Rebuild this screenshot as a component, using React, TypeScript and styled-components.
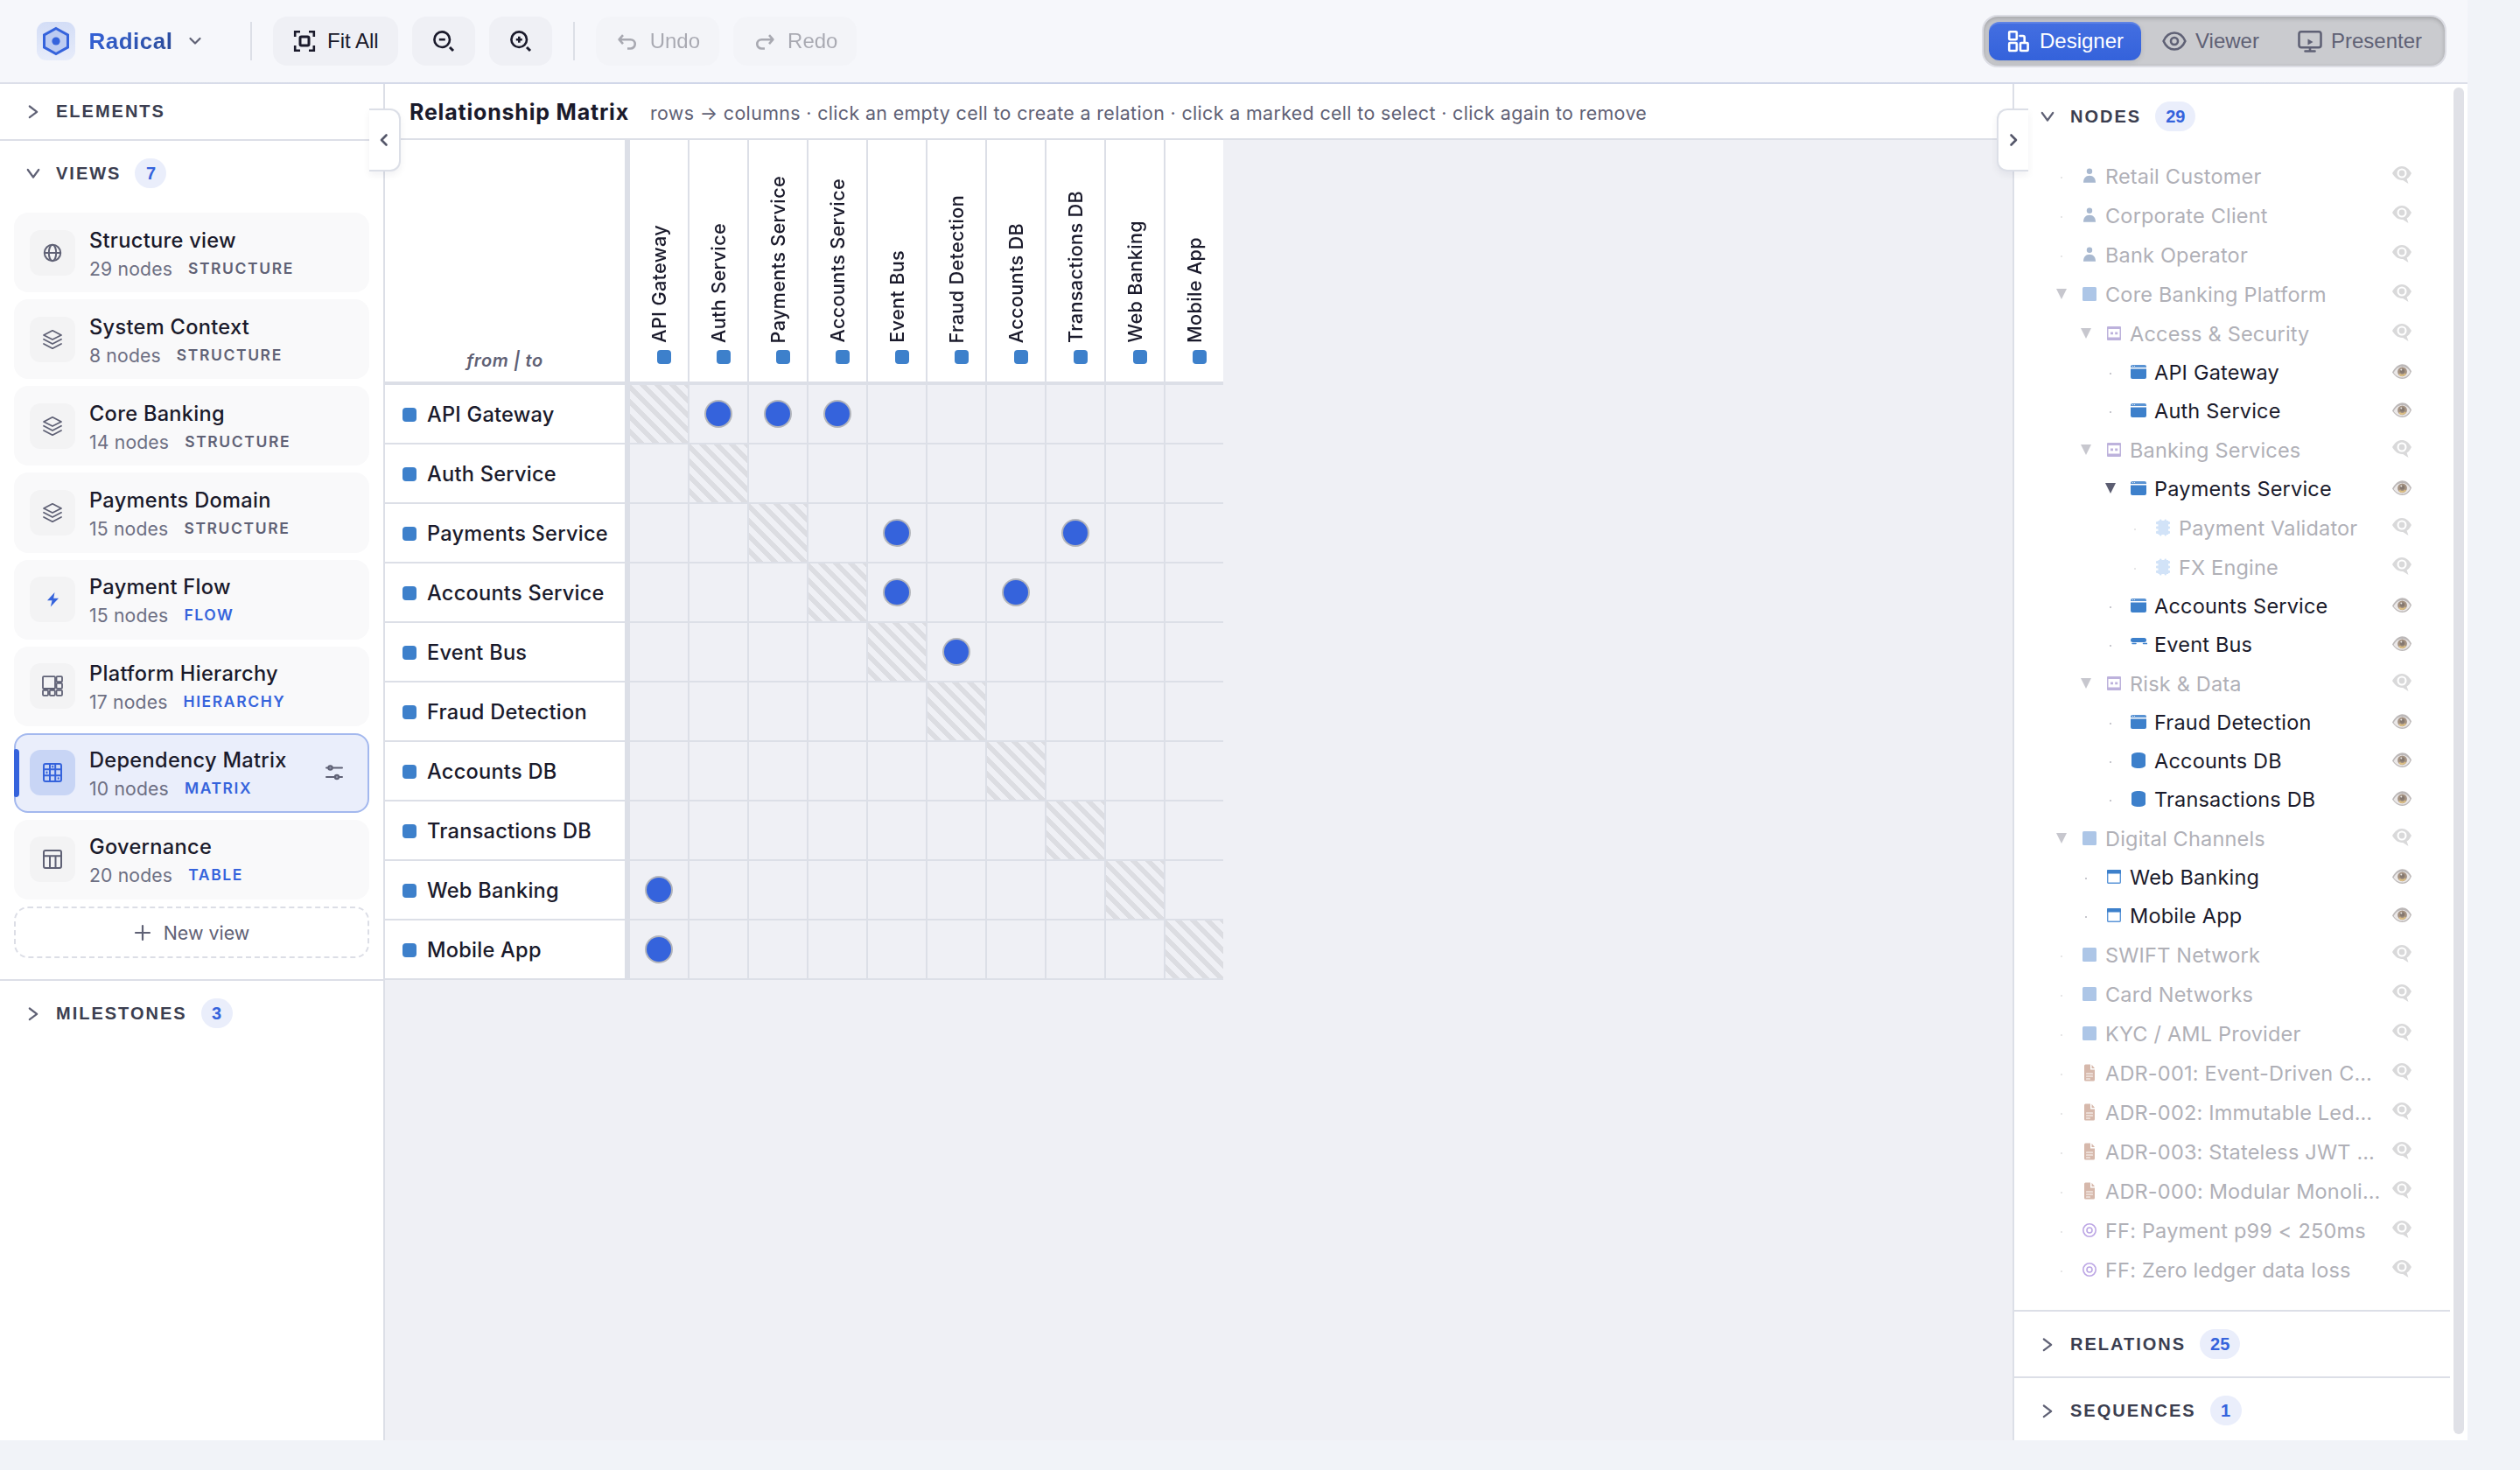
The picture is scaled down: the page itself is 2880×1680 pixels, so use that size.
import React from "react";
import styled, { createGlobalStyle, css } from "styled-components";

const ui = `Inter, "Liberation Sans", sans-serif`;
const arial = `"Liberation Sans", Arial, sans-serif`;

const c = {
  page: "#f1f3f8",
  header: "#f6f7fb",
  line: "#dcdfe7",
  canvas: "#eff0f5",
  ink: "#1a1a2b",
  muted: "#5f6175",
  heading: "#3b3e50",
  accent: "#3563dc",
  soft: "#eaeefb",
  node: "#3d80cb",
};

const GlobalStyle = createGlobalStyle`
  * { box-sizing: border-box; }
  html, body { margin: 0; padding: 0; background: ${c.page}; }
  body { font-family: ${ui}; color: ${c.ink}; }
  button { font: inherit; color: inherit; border: 0; margin: 0; padding: 0; background: none; }
`;

/* ---------- shell ---------- */

const Shell = styled.div`
  width: 2820px;
  height: 1646px;
  display: flex;
  flex-direction: column;
  overflow: hidden;
`;

const Header = styled.header`
  height: 96px;
  flex: none;
  display: flex;
  align-items: center;
  justify-content: space-between;
  padding: 0 24px 2px 42px;
  background:
    linear-gradient(90deg, #dcdfe9, #c6cfe8 50%, #dcdfe9) bottom / 100% 2px no-repeat,
    ${c.header};
`;

const HeaderGroup = styled.div`
  display: flex;
  align-items: center;
`;

const Brand = styled.div`
  width: 220px;
  display: flex;
  align-items: center;
`;

const BrandTile = styled.span`
  width: 44px;
  height: 44px;
  border-radius: 11px;
  display: grid;
  place-items: center;
  background: linear-gradient(180deg, #d3ddf6, #e7ecfa);
`;

const BrandName = styled.span`
  margin: 0 17px 0 15.5px;
  font: 700 26px/32px ${arial};
  letter-spacing: 0.5px;
  color: transparent;
  background: linear-gradient(135deg, ${c.accent}, #2a4a94);
  background-clip: text;
  -webkit-background-clip: text;
`;

const Divider = styled.i`
  width: 2px;
  height: 44px;
  margin: 0 24px;
  background: ${c.line};
`;

const Tools = styled.div`
  display: flex;
  gap: 16px;
`;

const ToolButton = styled.button<{ $disabled?: boolean }>`
  height: 56px;
  padding: 0 22px;
  display: flex;
  align-items: center;
  gap: 12px;
  border-radius: 16px;
  background: ${c.canvas};
  font: 400 24px/28px ${arial};
  opacity: ${(p) => (p.$disabled ? 0.35 : 1)};
`;

const ModeSwitch = styled.div`
  height: 60px;
  padding: 6px;
  display: flex;
  gap: 4px;
  border: 2px solid #dcdde4;
  border-radius: 18px;
  background: #cacbcf;
  box-shadow: inset 0 2px 5px rgba(0, 0, 0, 0.2);
`;

const ModeButton = styled.button<{ $active?: boolean }>`
  padding: 0 20px;
  display: flex;
  align-items: center;
  gap: 10px;
  border-radius: 12px;
  font: 400 24px/28px ${arial};
  color: ${c.muted};
  ${(p) =>
    p.$active &&
    css`
      color: #fff;
      background: linear-gradient(180deg, #446fe1, #3462db);
      box-shadow: inset 0 2px 0 rgba(255, 255, 255, 0.14), 0 2px 6px rgba(0, 0, 0, 0.1);
    `}
`;

const Body = styled.div`
  flex: 1;
  min-height: 0;
  display: flex;
`;

/* ---------- sidebars ---------- */

const LeftPanel = styled.aside`
  position: relative;
  z-index: 1;
  width: 440px;
  flex: none;
  background: #fff;
  border-right: 2px solid ${c.line};
`;

const RightPanel = styled.aside`
  position: relative;
  width: 520px;
  flex: none;
  display: flex;
  background: #fff;
  border-left: 2px solid ${c.line};
`;

const RightContent = styled.div`
  width: 498px;
  height: 1550px;
  overflow: hidden;
`;

const ScrollTrack = styled.div`
  width: 20px;
  padding: 4px 4px 7px;
  display: flex;
`;

const ScrollThumb = styled.div`
  flex: 1;
  border-radius: 6px;
  background: #e0e1e7;
`;

const CollapseTab = styled.button<{ $side: "left" | "right" }>`
  position: absolute;
  z-index: 2;
  top: 28px;
  width: 36px;
  height: 72px;
  display: grid;
  place-items: center;
  color: #55576a;
  background: #fff;
  border: 2px solid ${c.line};
  box-shadow: 0 4px 8px rgba(20, 24, 50, 0.06);
  ${(p) =>
    p.$side === "left"
      ? css`
          right: -20px;
          border-left: 0;
          border-radius: 0 12px 12px 0;
        `
      : css`
          left: -20px;
          border-right: 0;
          border-radius: 12px 0 0 12px;
        `}
`;

const Section = styled.section`
  border-bottom: 2px solid ${c.line};
  &:last-of-type {
    border-bottom: 0;
  }
`;

const SectionHead = styled.div`
  display: flex;
  align-items: center;
  padding: 20px 24px;
  color: ${c.heading};
  font: 700 20px/23px ${arial};
  letter-spacing: 2px;
  svg {
    margin-right: 12px;
    color: ${c.muted};
  }
`;

const Count = styled.span`
  min-width: 36px;
  height: 34px;
  margin-left: 16px;
  padding: 0 12px;
  border-radius: 17px;
  text-align: center;
  font: 700 20px/34px ${arial};
  letter-spacing: 0;
  color: ${c.accent};
  background: ${c.soft};
`;

const ViewList = styled.div`
  display: flex;
  flex-direction: column;
  gap: 8px;
  padding: 8px 16px 24px;
`;

const ViewCard = styled.div<{ $active?: boolean }>`
  position: relative;
  height: 91.14px;
  display: flex;
  align-items: center;
  padding: 0 26px 0 16px;
  border: 2px solid transparent;
  border-radius: 16px;
  background: #f9f9fa;
  ${(p) =>
    p.$active &&
    css`
      border-color: #a3b8ee;
      background: ${c.soft};
      &::before {
        content: "";
        position: absolute;
        left: -2px;
        top: 16px;
        width: 6px;
        height: 55px;
        border-radius: 2px 4px 4px 2px;
        background: ${c.accent};
      }
    `}
`;

const ViewTile = styled.span<{ $active?: boolean; $blue?: boolean }>`
  width: 52px;
  height: 52px;
  flex: none;
  margin-right: 16px;
  display: grid;
  place-items: center;
  border-radius: 12px;
  color: ${(p) => (p.$active || p.$blue ? c.accent : c.muted)};
  background: ${(p) => (p.$active ? "#c8d5f5" : "#f3f3f4")};
`;

const ViewText = styled.div`
  flex: 1;
  padding-top: 4px;
`;

const ViewTitle = styled.div`
  font-size: 23.6px;
  font-weight: 500;
  line-height: 32px;
  letter-spacing: 0.3px;
`;

const ViewMeta = styled.div`
  display: flex;
  align-items: center;
  gap: 18px;
  font-size: 21.2px;
  line-height: 32px;
  letter-spacing: 0.15px;
  color: #6d6f83;
`;

const ViewTag = styled.span<{ $blue?: boolean }>`
  font-size: 17.5px;
  font-weight: 600;
  letter-spacing: 1.6px;
  color: ${(p) => (p.$blue ? c.accent : c.muted)};
`;

const NewView = styled.button`
  height: 59px;
  display: flex;
  align-items: center;
  justify-content: center;
  gap: 14px;
  border: 2px dashed #dcdee6;
  border-radius: 16px;
  font-size: 21.4px;
  color: ${c.muted};
`;

/* ---------- matrix ---------- */

const Main = styled.main`
  flex: 1;
  background: ${c.canvas};
`;

const MatrixBar = styled.div`
  height: 64px;
  padding: 14px 0 0 28px;
  display: flex;
  align-items: baseline;
  gap: 24px;
  background: #fff;
  border-bottom: 2px solid ${c.line};
`;

const MatrixTitle = styled.h1`
  margin: 0;
  font-size: 25px;
  font-weight: 700;
  line-height: 36px;
  letter-spacing: 0.8px;
`;

const MatrixHint = styled.span`
  font-size: 21.4px;
  letter-spacing: 0.36px;
  color: ${c.muted};
`;

const Matrix = styled.div`
  width: 958px;
  display: grid;
  grid-template-columns: 280px repeat(9, 68px) 66px;
  grid-template-rows: 280px repeat(10, 68px);
`;

const Corner = styled.div`
  display: flex;
  align-items: flex-end;
  justify-content: center;
  padding-bottom: 11px;
  background: #fff;
  border-right: 6px solid ${c.line};
  border-bottom: 4px solid ${c.line};
  font-size: 20px;
  font-weight: 600;
  font-style: italic;
  line-height: 26px;
  letter-spacing: 0.6px;
  color: ${c.muted};
`;

const ColumnHead = styled.div<{ $last: boolean }>`
  display: flex;
  flex-direction: column;
  align-items: center;
  justify-content: flex-end;
  gap: 8px;
  padding-bottom: 20px;
  background: #fff;
  border-right: ${(p) => (p.$last ? 0 : 2)}px solid ${c.line};
  border-bottom: 4px solid ${c.line};
`;

const ColumnLabel = styled.span`
  writing-mode: vertical-rl;
  transform: rotate(180deg);
  font-size: 21.6px;
  font-weight: 500;
  line-height: 28px;
  letter-spacing: 0.35px;
  white-space: nowrap;
`;

const Swatch = styled.i<{ $shift?: boolean }>`
  width: 16px;
  height: 16px;
  flex: none;
  border-radius: 4px;
  margin-left: ${(p) => (p.$shift ? 12 : 0)}px;
  background: ${c.node};
`;

const RowHead = styled.div`
  display: flex;
  align-items: center;
  gap: 12px;
  padding: 1px 0 0 20px;
  background: #fff;
  border-right: 6px solid ${c.line};
  border-bottom: 2px solid ${c.line};
  font-size: 23.6px;
  font-weight: 500;
  letter-spacing: 0.24px;
  white-space: nowrap;
`;

const Cell = styled.div<{ $self: boolean; $last: boolean }>`
  display: grid;
  place-items: center;
  border-right: ${(p) => (p.$last ? 0 : 2)}px solid ${c.line};
  border-bottom: 2px solid ${c.line};
  ${(p) =>
    p.$self &&
    css`
      background: repeating-linear-gradient(45deg, ${c.canvas} 0 6px, #dcdde2 6px 12px) padding-box;
    `}
`;

const Dot = styled.i`
  width: 28px;
  height: 28px;
  border-radius: 50%;
  background: ${c.accent};
  box-shadow: 0 0 0 2px #b3b5bb;
`;

/* ---------- node tree ---------- */

const Tree = styled.div`
  padding: 8px 0 24px;
`;

const TreeRow = styled.div<{ $level: number; $dim: boolean }>`
  height: ${(p) => (p.$dim ? 45 : 44)}px;
  padding: ${(p) => (p.$dim ? 1 : 0)}px 43px 0 ${(p) => 42 + p.$level * 28}px;
  display: flex;
  align-items: center;
  font-size: 23.5px;
  letter-spacing: 0.19px;
`;

const Toggle = styled.span<{ $dim: boolean }>`
  width: 24px;
  height: 20px;
  margin-right: 10px;
  display: grid;
  place-items: center;
  color: ${(p) => (p.$dim ? "#c7c7ce" : "#5c5e72")};
`;

const Leaf = styled.i<{ $dim: boolean }>`
  width: 2px;
  height: 2px;
  border-radius: 1px;
  margin-top: 3px;
  background: ${(p) => (p.$dim ? "#dededf" : "#b4b5bc")};
`;

const NodeIcon = styled.span`
  width: 20px;
  height: 20px;
  margin-right: 8px;
  display: grid;
  place-items: center;
`;

const NodeName = styled.span<{ $dim: boolean }>`
  flex: 1;
  white-space: nowrap;
  color: ${(p) => (p.$dim ? "#b0b0b7" : c.ink)};
`;

const HiddenMark = styled.span`
  margin-bottom: 3px;
`;

/* ---------- icons ---------- */

const Svg = ({ s = 28, w = 2.6, box, children, ...rest }: any) => (
  <svg
    width={s}
    height={s}
    viewBox={box ?? `0 0 ${s} ${s}`}
    fill="none"
    stroke="currentColor"
    strokeWidth={w}
    strokeLinecap="round"
    strokeLinejoin="round"
    display="block"
    {...rest}
  >
    {children}
  </svg>
);

const Logo = () => (
  <Svg s={36} w={3} color={c.accent}>
    <path d="M18 3.5 31.5 11v14L18 32.5 4.5 25V11z" fill="#bccbf1" strokeLinejoin="miter" />
    <circle cx="18" cy="18" r="4.6" fill={c.accent} stroke="none" />
  </Svg>
);
const FitIcon = () => (
  <Svg strokeLinecap="butt" strokeLinejoin="miter">
    <path d="M3.2 9V3.2H9M19 3.2h5.8V9M24.8 19v5.8H19M9 24.8H3.2V19" />
    <rect x="9" y="9" width="10" height="10" rx="1.5" strokeWidth="3" />
  </Svg>
);
const ZoomIcon = ({ plus }: { plus?: boolean }) => (
  <Svg strokeLinecap="butt">
    <circle cx="12.2" cy="12.2" r="8.8" />
    <path d={plus ? "M8.8 12.2h7M12.3 8.7v7" : "M8.8 12.2h7"} />
    <path d="M21 21l4 4" strokeWidth="3" />
  </Svg>
);
const UndoIcon = ({ flip }: { flip?: boolean }) => (
  <Svg transform={flip ? "scale(-1 1)" : undefined}>
    <path d="M9 7.2L4.6 12.2l4.4 5M5 12.2h12.6a5.1 5.1 0 010 10.3H14" strokeLinecap="butt" />
  </Svg>
);
const DesignerIcon = () => (
  <Svg>
    <rect x="3.2" y="3.2" width="8.6" height="9" rx="1" />
    <rect x="3.2" y="16" width="8.6" height="9" rx="1" />
    <rect x="16" y="16" width="8.6" height="9" rx="1" />
    <path d="M15.5 8h3.4a1.8 1.8 0 011.8 1.8V15" />
  </Svg>
);
const ViewerIcon = () => (
  <Svg>
    <path d="M1.6 14C4 8.5 8.5 4.5 14 4.5S24 8.5 26.4 14C24 19.5 19.5 23.5 14 23.5S4 19.5 1.6 14z" />
    <circle cx="14" cy="14" r="4" />
  </Svg>
);
const PresenterIcon = () => (
  <Svg>
    <rect x="1.5" y="3.2" width="25" height="18" rx="2.5" />
    <path d="M8.5 25.5h11M14 22v3" />
    <path d="M11.5 11.5v7l6-3.500z" fill="currentColor" stroke="none" />
  </Svg>
);
const TabChevron = ({ right }: { right?: boolean }) => (
  <Svg s={20} w={2.6} transform={right ? "scale(-1 1)" : undefined}>
    <path d="M12.5 4.5L7 10l5.5 5.5" />
  </Svg>
);

const viewIcons: Record<string, React.ReactNode> = {
  globe: (
    <Svg s={24} w={2}>
      <circle cx="12" cy="12" r="9.2" />
      <ellipse cx="12" cy="12" rx="4.2" ry="9.2" />
      <path d="M3 12h18" />
    </Svg>
  ),
  layers: (
    <Svg s={24} w={1.8}>
      <path d="M12 1.8L22 7l-10 5L2 7z" />
      <path d="M2 11.8l10 5.2 10-5.2M2 17l10 5.2L22 17" />
    </Svg>
  ),
  bolt: (
    <Svg s={24}>
      <path d="M14.5 4L6 13.2h5.5L9.8 20.5 19 10.8h-5.8z" fill="currentColor" stroke="none" />
    </Svg>
  ),
  hierarchy: (
    <Svg s={24} w={1.8}>
      <rect x="1" y="1.2" width="14" height="13.8" rx="1" />
      <rect x="16.5" y="1.2" width="6.5" height="6" rx="1" />
      <rect x="16.5" y="8.8" width="6.5" height="6" rx="1" />
      <rect x="1" y="16.8" width="6" height="6" rx="1" />
      <rect x="8.8" y="16.8" width="6" height="6" rx="1" />
      <rect x="16.5" y="16.8" width="6.5" height="6" rx="1" />
    </Svg>
  ),
  matrix: (
    <Svg s={24} w={2}>
      <rect x="2" y="2" width="20" height="20" rx="2" />
      <path d="M9 2v20M15.2 2v20M2 8.2h20M2 15.2h20" />
      <path d="M12.2 4.8v.6M5.5 11.6v.6M18.7 18.2v.6" />
    </Svg>
  ),
  table: (
    <Svg s={24} w={2}>
      <rect x="2" y="2" width="20" height="20" rx="2" />
      <path d="M2 8.2h20M9 8.2V22M15.5 8.2V22" />
    </Svg>
  ),
};

const SettingsIcon = () => (
  <Svg s={24} w={2} color={c.muted}>
    <path d="M3 6.5h18M3 17h18" />
    <circle cx="7.5" cy="6.5" r="2.2" fill="#8f93a8" />
    <circle cx="15" cy="17" r="2.2" fill="#8f93a8" />
  </Svg>
);
const PlusIcon = () => (
  <Svg s={20} w={2.2}>
    <path d="M10 2v16M2 10h16" />
  </Svg>
);

const nodeIcons: Record<string, React.ReactNode> = {
  person: (
    <Svg s={20} stroke="none">
      <g fill="#a9b9d0">
        <circle cx="10" cy="4.8" r="3.2" />
        <path d="M3 17.8c0-5 2.5-8 7-8s7 3 7 8z" />
      </g>
    </Svg>
  ),
  system: (
    <Svg s={20} stroke="none">
      <rect x="2" y="2" width="16" height="16" rx="1.5" fill="#adc6e7" />
    </Svg>
  ),
  group: (
    <Svg s={20} stroke="none">
      <path fill="#bdb2dc" fillRule="evenodd" d="M3 2h14a1 1 0 011 1v14a1 1 0 01-1 1H3a1 1 0 01-1-1V3a1 1 0 011-1zm.5 3v9.500h13V5z" />
      <path fill="#bdb2dc" d="M6 8.5h3v2.8H6zM11.2 8.5h3v2.8h-3z" />
    </Svg>
  ),
  service: (
    <Svg s={20} stroke="none">
      <path fill={c.node} d="M1 5V4a2 2 0 012-2h14a2 2 0 012 2v1z" opacity=".85" />
      <path d="M3 3.5h1M5 3.5h1" stroke="#fff" strokeWidth="0.8" strokeLinecap="butt" />
      <path fill={c.node} d="M1 6.5h18V16a2 2 0 01-2 2H3a2 2 0 01-2-2z" />
    </Svg>
  ),
  chip: (
    <Svg s={20} stroke="none">
      <g fill="#d2e3f8">
        <rect x="4.5" y="2" width="11.5" height="16" />
        <rect x="2" y="3" width="16" height="3.2" rx="1" />
        <rect x="2" y="8.4" width="16" height="3.2" rx="1" />
        <rect x="2" y="13.8" width="16" height="3.2" rx="1" />
        <rect x="6" y="0.5" width="2.4" height="19" rx="1" />
        <rect x="11.6" y="0.5" width="2.4" height="19" rx="1" />
      </g>
    </Svg>
  ),
  bus: (
    <Svg s={20} stroke="none">
      <rect x="1" y="3" width="18" height="5" rx="2.5" fill={c.node} />
      <path d="M3 9.5h4M15.5 9.5H20" stroke={c.node} strokeWidth="1.5" />
    </Svg>
  ),
  db: (
    <Svg s={20} stroke="none">
      <path fill={c.node} d="M2 4.5C2 2.3 5.5 1 10 1s8 1.3 8 3.5v11c0 2.2-3.5 3.5-8 3.5s-8-1.300-8-3.500z" />
    </Svg>
  ),
  app: (
    <Svg s={20} w={1.4} color="#5b95d8">
      <rect x="2.7" y="2.7" width="14.6" height="14.6" rx="1" />
      <path d="M2 3a1 1 0 011-1h14a1 1 0 011 1v3.5H2z" fill={c.node} stroke="none" />
    </Svg>
  ),
  doc: (
    <Svg s={20} stroke="none">
      <path fill="#d6b8ab" d="M4 2a1.5 1.5 0 011.5-1.500H11v6h5V18a1.500 1.500 0 01-1.500 1.500h-9A1.500 1.500 0 014 18zM12.500 .8L16 5h-3.500z" />
      <path d="M6.500 11h7M6.500 14h7M6.500 17h4" stroke="#fff" strokeWidth="1.1" />
    </Svg>
  ),
  target: (
    <Svg s={20} w={1.6} color="#bca6e4">
      <circle cx="10" cy="10" r="7.2" />
      <circle cx="10" cy="10" r="3" />
    </Svg>
  ),
};

const EyeOpen = () => (
  <svg width="24" height="20" viewBox="0 0 24 20" display="block">
    <path d="M1 10.5C4 5 8 1.2 12.5 1.2S20.500 4.500 23 9.500c-2 5-6 8.500-10.500 8.500S4 15 1 10.500z" fill="#bcb8b8" />
    <path d="M2.500 11C5 6.500 8.500 4 12.500 4s7 2.500 9 6c-2 4-5 6.500-9 6.500S5 14.500 2.500 11z" fill="#ebe8e8" />
    <circle cx="12.5" cy="9.8" r="5.4" fill="#a39181" />
    <path d="M9 12.5a4.500 4.500 0 007.200-.5" stroke="#dcbf84" strokeWidth="2" fill="none" />
    <circle cx="12.5" cy="9" r="2.6" fill="#85786f" />
    <circle cx="11.3" cy="7.5" r="1" fill="#e8e4e0" />
  </svg>
);
const EyeHidden = () => (
  <svg width="24" height="24" viewBox="0 0 24 24" display="block">
    <path
      fill="#d9d9da"
      fillRule="evenodd"
      d="M1 10C4 5 7.500 2 12 2s8 3 11 8c-1.500 3-3.300 5.200-5.400 6.600L19.500 22l-6.300-4.100C8 18.500 4 15 1 10zM12 4.500a5.500 5.500 0 100 11 5.500 5.500 0 000-11z"
    />
    <circle cx="12" cy="10" r="3.4" fill="#d9d9da" />
  </svg>
);

/* ---------- data ---------- */

const views = [
  { name: "Structure view", nodes: 29, tag: "STRUCTURE", icon: "globe" },
  { name: "System Context", nodes: 8, tag: "STRUCTURE", icon: "layers" },
  { name: "Core Banking", nodes: 14, tag: "STRUCTURE", icon: "layers" },
  { name: "Payments Domain", nodes: 15, tag: "STRUCTURE", icon: "layers" },
  { name: "Payment Flow", nodes: 15, tag: "FLOW", icon: "bolt" },
  { name: "Platform Hierarchy", nodes: 17, tag: "HIERARCHY", icon: "hierarchy" },
  { name: "Dependency Matrix", nodes: 10, tag: "MATRIX", icon: "matrix", active: true },
  { name: "Governance", nodes: 20, tag: "TABLE", icon: "table" },
];

const elements = [
  "API Gateway",
  "Auth Service",
  "Payments Service",
  "Accounts Service",
  "Event Bus",
  "Fraud Detection",
  "Accounts DB",
  "Transactions DB",
  "Web Banking",
  "Mobile App",
];

const relations = new Set(["0-1", "0-2", "0-3", "2-4", "2-7", "3-4", "3-6", "4-5", "8-0", "9-0"]);

type Node = [level: number, icon: string, name: string, visible?: boolean, open?: boolean];

const nodes: Node[] = [
  [0, "person", "Retail Customer"],
  [0, "person", "Corporate Client"],
  [0, "person", "Bank Operator"],
  [0, "system", "Core Banking Platform", false, true],
  [1, "group", "Access & Security", false, true],
  [2, "service", "API Gateway", true],
  [2, "service", "Auth Service", true],
  [1, "group", "Banking Services", false, true],
  [2, "service", "Payments Service", true, true],
  [3, "chip", "Payment Validator"],
  [3, "chip", "FX Engine"],
  [2, "service", "Accounts Service", true],
  [2, "bus", "Event Bus", true],
  [1, "group", "Risk & Data", false, true],
  [2, "service", "Fraud Detection", true],
  [2, "db", "Accounts DB", true],
  [2, "db", "Transactions DB", true],
  [0, "system", "Digital Channels", false, true],
  [1, "app", "Web Banking", true],
  [1, "app", "Mobile App", true],
  [0, "system", "SWIFT Network"],
  [0, "system", "Card Networks"],
  [0, "system", "KYC / AML Provider"],
  [0, "doc", "ADR-001: Event-Driven C…"],
  [0, "doc", "ADR-002: Immutable Led…"],
  [0, "doc", "ADR-003: Stateless JWT …"],
  [0, "doc", "ADR-000: Modular Monoli…"],
  [0, "target", "FF: Payment p99 < 250ms"],
  [0, "target", "FF: Zero ledger data loss"],
];

const ChevronDownHead = () => (
  <Svg w={2.2} height={23} box="0 2.5 28 23">
    <path d="M7.8 9.5l6.2 8.5 6.2-8.5" />
  </Svg>
);
const ChevronRightHead = () => (
  <Svg w={2.2} height={23} box="0 2.5 28 23">
    <path d="M9.8 8l8.4 6.3-8.4 6.3" />
  </Svg>
);

const SectionHeader = ({ title, count, open }: { title: string; count?: number; open?: boolean }) => (
  <SectionHead>
    {open ? <ChevronDownHead /> : <ChevronRightHead />}
    {title}
    {count !== undefined && <Count>{count}</Count>}
  </SectionHead>
);

/* ---------- page ---------- */

export default function App() {
  return (
    <Shell>
      <GlobalStyle />
      <Header>
        <HeaderGroup>
          <Brand>
            <BrandTile>
              <Logo />
            </BrandTile>
            <BrandName>Radical</BrandName>
            <Svg s={16} w={2.2} color={c.muted}>
              <path d="M2.5 5l5.5 5.5L13.5 5" />
            </Svg>
          </Brand>
          <Divider />
          <Tools>
            <ToolButton>
              <FitIcon />
              Fit All
            </ToolButton>
            <ToolButton>
              <ZoomIcon />
            </ToolButton>
            <ToolButton>
              <ZoomIcon plus />
            </ToolButton>
          </Tools>
          <Divider />
          <Tools>
            <ToolButton $disabled>
              <UndoIcon />
              Undo
            </ToolButton>
            <ToolButton $disabled>
              <UndoIcon flip />
              Redo
            </ToolButton>
          </Tools>
        </HeaderGroup>
        <ModeSwitch>
          <ModeButton $active>
            <DesignerIcon />
            Designer
          </ModeButton>
          <ModeButton>
            <ViewerIcon />
            Viewer
          </ModeButton>
          <ModeButton>
            <PresenterIcon />
            Presenter
          </ModeButton>
        </ModeSwitch>
      </Header>

      <Body>
        <LeftPanel>
          <Section>
            <SectionHeader title="ELEMENTS" />
          </Section>
          <Section>
            <SectionHeader title="VIEWS" count={7} open />
            <ViewList>
              {views.map((v) => (
                <ViewCard key={v.name} $active={v.active}>
                  <ViewTile $active={v.active} $blue={v.icon === "bolt"}>
                    {viewIcons[v.icon]}
                  </ViewTile>
                  <ViewText>
                    <ViewTitle>{v.name}</ViewTitle>
                    <ViewMeta>
                      {v.nodes} nodes
                      <ViewTag $blue={v.tag !== "STRUCTURE"}>{v.tag}</ViewTag>
                    </ViewMeta>
                  </ViewText>
                  {v.active && <SettingsIcon />}
                </ViewCard>
              ))}
              <NewView>
                <PlusIcon />
                New view
              </NewView>
            </ViewList>
          </Section>
          <Section>
            <SectionHeader title="MILESTONES" count={3} />
          </Section>
          <CollapseTab $side="left">
            <TabChevron />
          </CollapseTab>
        </LeftPanel>

        <Main>
          <MatrixBar>
            <MatrixTitle>Relationship Matrix</MatrixTitle>
            <MatrixHint>
              rows → columns · click an empty cell to create a relation · click a marked cell to select · click again to remove
            </MatrixHint>
          </MatrixBar>
          <Matrix>
            <Corner>from | to</Corner>
            {elements.map((name, i) => (
              <ColumnHead key={name} $last={i === 9}>
                <ColumnLabel>{name}</ColumnLabel>
                <Swatch $shift />
              </ColumnHead>
            ))}
            {elements.map((name, r) => (
              <React.Fragment key={name}>
                <RowHead>
                  <Swatch />
                  {name}
                </RowHead>
                {elements.map((to, k) => (
                  <Cell key={to} $self={r === k} $last={k === 9}>
                    {relations.has(`${r}-${k}`) && <Dot />}
                  </Cell>
                ))}
              </React.Fragment>
            ))}
          </Matrix>
        </Main>

        <RightPanel>
          <CollapseTab $side="right">
            <TabChevron right />
          </CollapseTab>
          <RightContent>
            <Section>
              <SectionHeader title="NODES" count={29} open />
              <Tree>
                {nodes.map(([level, icon, name, visible, open]) => (
                  <TreeRow key={name} $level={level} $dim={!visible}>
                    <Toggle $dim={!visible}>
                      {open ? (
                        <svg width="12" height="12" viewBox="0 0 12 12">
                          <path d="M0 0h12L6 12z" fill="currentColor" />
                        </svg>
                      ) : (
                        <Leaf $dim={!visible} />
                      )}
                    </Toggle>
                    <NodeIcon>{nodeIcons[icon]}</NodeIcon>
                    <NodeName $dim={!visible}>{name}</NodeName>
                    {visible ? (
                      <EyeOpen />
                    ) : (
                      <HiddenMark>
                        <EyeHidden />
                      </HiddenMark>
                    )}
                  </TreeRow>
                ))}
              </Tree>
            </Section>
            <Section>
              <SectionHeader title="RELATIONS" count={25} />
            </Section>
            <Section>
              <SectionHeader title="SEQUENCES" count={1} />
            </Section>
          </RightContent>
          <ScrollTrack>
            <ScrollThumb />
          </ScrollTrack>
        </RightPanel>
      </Body>
    </Shell>
  );
}
